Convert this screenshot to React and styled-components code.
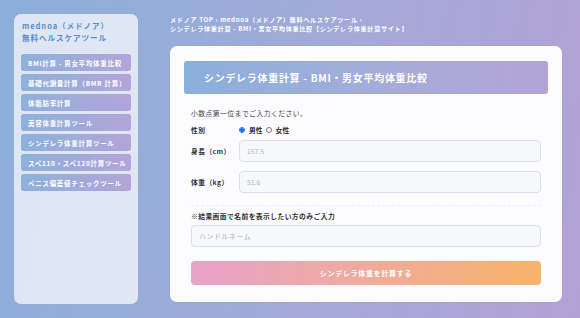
import React from "react";
import styled, { createGlobalStyle } from "styled-components";

const Global = createGlobalStyle`
  html, body { margin: 0; padding: 0; }
  body {
    width: 580px; height: 318px; overflow: hidden;
    font-family: "Noto Sans CJK JP", "Noto Sans", sans-serif;
    background: linear-gradient(100deg, #8bb0da 0%, #a3a9d8 55%, #b3a1d5 100%);
  }
  * { box-sizing: border-box; }
`;

const Page = styled.div`
  display: flex;
  gap: 32px;
  padding: 14px 18px 0 14px;
  height: 318px;
`;

const Sidebar = styled.aside`
  width: 124px;
  height: 290px;
  flex: none;
  background: rgba(236, 240, 248, 0.85);
  border-radius: 7px;
  padding: 6px 7px;
  display: flex;
  flex-direction: column;
`;

const SideTitle = styled.div`
  color: #5b8dcc;
  font-size: 7.6px;
  font-weight: 700;
  letter-spacing: 0.12em;
  line-height: 11.5px;
  padding-left: 1px;
  margin-bottom: 11px;
`;

const NavList = styled.nav`
  display: flex;
  flex-direction: column;
  gap: 3px;
`;

const NavItem = styled.a`
  display: flex;
  align-items: center;
  height: 17px;
  line-height: 10px;
  padding-left: 7px;
  border-radius: 3px;
  background: linear-gradient(90deg, #8db1dc 0%, #b3a4d8 100%);
  color: #fff;
  font-size: 6.5px;
  font-weight: 700;
  letter-spacing: 0.11em;
  white-space: nowrap;
  text-decoration: none;
`;

const Main = styled.main`
  flex: 1;
  display: flex;
  flex-direction: column;
`;

const Crumbs = styled.div`
  color: #fff;
  font-size: 6.2px;
  font-weight: 700;
  letter-spacing: 0.1em;
  line-height: 9px;
  padding-top: 0.5px;
  margin-bottom: 13.5px;
`;

const Card = styled.section`
  background: #fcfcfe;
  border-radius: 7px;
  padding: 15px 14px 17px;
`;

const Header = styled.h1`
  margin: 0;
  height: 33px;
  display: flex;
  align-items: center;
  padding-left: 20px;
  border-radius: 3px;
  background: linear-gradient(90deg, #8ab0db 0%, #a5acd9 55%, #b2a3d6 100%);
  color: #fff;
  font-size: 10px;
  font-weight: 700;
  letter-spacing: 0.07em;
`;

const Form = styled.div`
  padding: 0 7px;
  display: flex;
  flex-direction: column;
`;

const Note = styled.p`
  margin: 14px 0 0;
  font-size: 6.8px;
  color: #444;
  letter-spacing: 0.07em;
  line-height: 10px;
`;

const Row = styled.div`
  display: flex;
  align-items: center;
  margin-top: ${(p) => p.$mt}px;
`;

const Label = styled.div`
  width: 48px;
  flex: none;
  font-size: 6.8px;
  font-weight: 700;
  color: #333;
  letter-spacing: 0.06em;
`;

const Radios = styled.div`
  display: flex;
  align-items: center;
  gap: 3px;
  font-size: 6.8px;
  font-weight: 700;
  color: #333;
`;

const Radio = styled.span`
  width: 6px;
  height: 6px;
  border-radius: 50%;
  border: 1px solid ${(p) => (p.$on ? "#1a73e8" : "#777")};
  background: ${(p) => (p.$on ? "radial-gradient(circle, #1a73e8 0 1.6px, #fff 1.8px)" : "#fff")};
  margin-right: 1px;
`;

const Input = styled.div`
  flex: 1;
  height: 22px;
  background: #f7f8fa;
  border: 1px solid #dcdfee;
  border-radius: 4px;
  display: flex;
  align-items: center;
  padding-left: 7px;
  font-size: 6.8px;
  color: #b4b4b8;
  letter-spacing: ${(p) => p.$ls || 0}em;
`;

const Divider = styled.hr`
  margin: 12px 0 0;
  border: none;
  border-top: 1px dashed #ececf2;
`;

const SubNote = styled.div`
  margin-top: 5px;
  font-size: 6.8px;
  font-weight: 700;
  color: #333;
  letter-spacing: 0.06em;
  line-height: 10px;
`;

const Button = styled.button`
  margin-top: 14px;
  height: 24px;
  border: none;
  border-radius: 4px;
  background: linear-gradient(90deg, #e8a3c9 0%, #eea9a6 40%, #f7b46b 100%);
  color: #fff;
  font-family: inherit;
  font-size: 7px;
  font-weight: 700;
  letter-spacing: 0.1em;
`;

const nav = [
  "BMI計算 - 男女平均体重比較",
  "基礎代謝量計算（BMR 計算）",
  "体脂肪率計算",
  "美容体重計算ツール",
  "シンデレラ体重計算ツール",
  "スペ110・スペ120計算ツール",
  "ペニス偏差値チェックツール",
];

export default function App() {
  return (
    <>
      <Global />
      <Page>
        <Sidebar>
          <SideTitle>
            mednoa（メドノア）
            <br />
            無料ヘルスケアツール
          </SideTitle>
          <NavList>
            {nav.map((n) => (
              <NavItem key={n}>{n}</NavItem>
            ))}
          </NavList>
        </Sidebar>
        <Main>
          <Crumbs>
            メドノア TOP › mednoa（メドノア）無料ヘルスケアツール ›
            <br />
            シンデレラ体重計算 - BMI・男女平均体重比較【シンデレラ体重計算サイト】
          </Crumbs>
          <Card>
            <Header>シンデレラ体重計算 - BMI・男女平均体重比較</Header>
            <Form>
              <Note>小数点第一位までご入力ください。</Note>
              <Row $mt={7}>
                <Label>性別</Label>
                <Radios>
                  <Radio $on />
                  男性
                  <Radio />
                  女性
                </Radios>
              </Row>
              <Row $mt={5}>
                <Label>身長（cm）</Label>
                <Input>157.5</Input>
              </Row>
              <Row $mt={9}>
                <Label>体重（kg）</Label>
                <Input>51.6</Input>
              </Row>
              <Divider />
              <SubNote>※結果画面で名前を表示したい方のみご入力</SubNote>
              <Row $mt={4}>
                <Input $ls={0.1}>ハンドルネーム</Input>
              </Row>
              <Button>シンデレラ体重を計算する</Button>
            </Form>
          </Card>
        </Main>
      </Page>
    </>
  );
}
